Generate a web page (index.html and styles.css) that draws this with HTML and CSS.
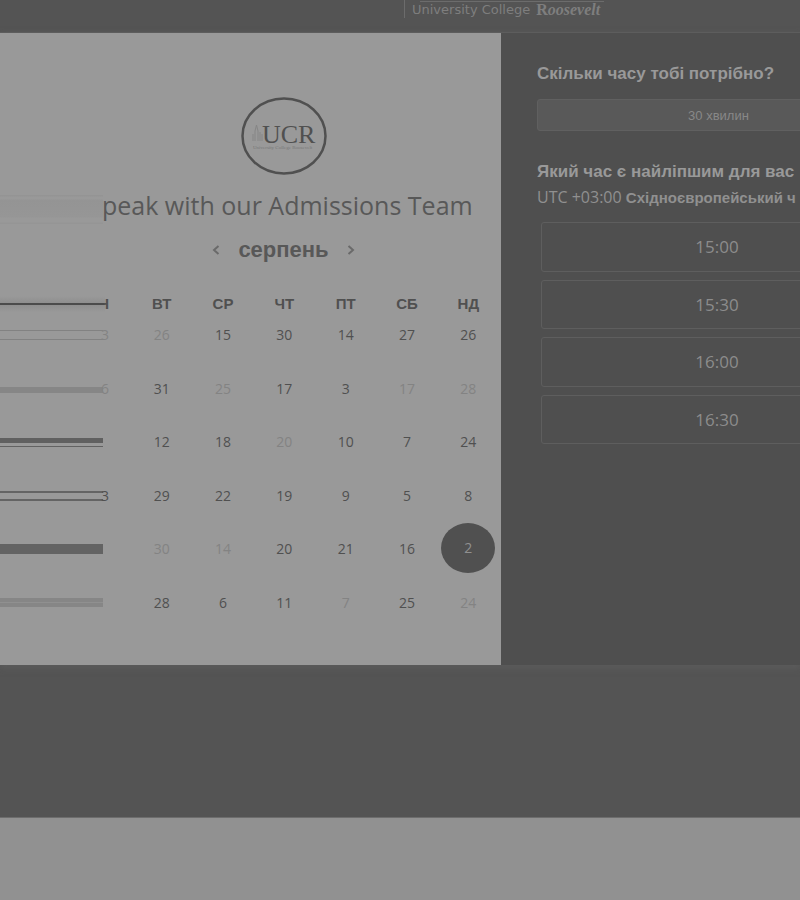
FILE: index.html
```html
<!DOCTYPE html>
<html lang="uk">
<head>
<meta charset="utf-8">
<title>Admissions Team</title>
<link rel="stylesheet" href="styles.css">
</head>
<body>
<header class="site-header">
  <div class="brand"><div class="brand-rule"></div><div class="brand-name"><span>University College</span><em><b>R</b>oosevelt</em></div></div>
</header>
<main class="booking">
  <section class="calendar">
    <svg class="logo" viewBox="0 0 88 80" role="img" aria-label="UCR">
      <ellipse cx="44" cy="40" rx="41.500" ry="37.500" fill="none" stroke="#505050" stroke-width="2.500"/>
      <path d="M13 45V38M15 45V35l1.500-6 1.500 6v10M20 45V36M22 45V38" fill="none" stroke="#858585" stroke-width="1"/>
      <text class="logo-letters" x="22" y="47">UCR</text>
      <text class="logo-caption" x="13" y="53">University College Roosevelt</text>
    </svg>
    <h1 class="title">peak with our Admissions Team</h1>
    <div class="month">
      <button class="arrow" aria-label="Попередній місяць"><svg viewBox="0 0 8 10"><path d="M6.500 1L2 5l4.500 4"/></svg></button>
      <h2>серпень</h2>
      <button class="arrow" aria-label="Наступний місяць"><svg viewBox="0 0 8 10"><path d="M1.500 1L6 5 1.500 9"/></svg></button>
    </div>
    <table class="days">
      <thead><tr><th class="edge streak-head"><span class="cut">Н</span></th><th>ВТ</th><th>СР</th><th>ЧТ</th><th>ПТ</th><th>СБ</th><th>НД</th></tr></thead>
      <tbody>
        <tr><td class="edge streak-a"><button disabled>3</button></td><td><button disabled>26</button></td><td><button>15</button></td><td><button>30</button></td><td><button>14</button></td><td><button>27</button></td><td><button>26</button></td></tr>
        <tr><td class="edge streak-b"><button disabled>6</button></td><td><button>31</button></td><td><button disabled>25</button></td><td><button>17</button></td><td><button>3</button></td><td><button disabled>17</button></td><td><button disabled>28</button></td></tr>
        <tr><td class="edge streak-c"></td><td><button>12</button></td><td><button>18</button></td><td><button disabled>20</button></td><td><button>10</button></td><td><button>7</button></td><td><button>24</button></td></tr>
        <tr><td class="edge streak-d"><button>3</button></td><td><button>29</button></td><td><button>22</button></td><td><button>19</button></td><td><button>9</button></td><td><button>5</button></td><td><button>8</button></td></tr>
        <tr><td class="edge streak-e"></td><td><button disabled>30</button></td><td><button disabled>14</button></td><td><button>20</button></td><td><button>21</button></td><td><button>16</button></td><td><button class="selected">2</button></td></tr>
        <tr><td class="edge streak-f"></td><td><button>28</button></td><td><button>6</button></td><td><button>11</button></td><td><button disabled>7</button></td><td><button>25</button></td><td><button disabled>24</button></td></tr>
      </tbody>
    </table>
  </section>
  <section class="schedule">
    <h2>Скільки часу тобі потрібно?</h2>
    <button class="duration">30 хвилин</button>
    <h2>Який час є найліпшим для вас</h2>
    <p class="zone"><span>UTC +03:00</span> <b>Східноєвропейський ч</b></p>
    <div class="slots">
      <button>15:00</button>
      <button>15:30</button>
      <button>16:00</button>
      <button>16:30</button>
    </div>
  </section>
</main>
<footer class="site-footer"></footer>
</body>
</html>
```
FILE: styles.css
```css
* { box-sizing: border-box; }
body {
  margin: 0;
  min-height: 100vh;
  display: flex;
  flex-direction: column;
  overflow-x: hidden;
  background: #545454;
  font-family: "Open Sans", "Liberation Sans", sans-serif;
  color: #505050;
}
h1, h2, p { margin: 0; }
button { font: inherit; color: inherit; background: none; border: 0; padding: 0; }

.site-header { height: 32px; padding-left: 404px; }
.brand { width: 200px; height: 18px; border-left: 1px solid #6c6c6c; color: #7e7e7e; }
.brand-rule { height: 2px; margin-left: 15px; border-bottom: 1px solid #6c6c6c; }
.brand-name {
  display: flex;
  gap: 6px;
  padding-left: 7px;
  font-size: 13px;
  line-height: 16px;
  white-space: nowrap;
}
.brand-name span { flex: 0 0 118px; font-family: "DejaVu Sans", sans-serif; }
.brand-name em { font: italic bold 16px/16px "Liberation Serif", serif; }
.brand-name b { font-style: normal; }

.booking {
  display: grid;
  grid-template-columns: minmax(0, 501fr) minmax(0, 299fr);
  border-top: 1px solid #5d5d5d;
  box-shadow: 0 3px 6px #5c5c5c;
}
.calendar {
  background: #999;
  padding: 63px 0 19px;
  display: flex;
  flex-direction: column;
}
.logo { align-self: flex-start; width: 88px; height: 80px; margin-left: calc(50% - 11px); }
.logo-letters { font: 26px "Liberation Serif", serif; fill: #505050; }
.logo-caption { font: 5px "Liberation Serif", serif; fill: #777; }
.title {
  margin-top: 10px;
  padding-left: 102px;
  font-size: 25px;
  font-weight: 400;
  line-height: 38px;
  color: #585858;
  white-space: nowrap;
  word-spacing: normal;
  background: linear-gradient(#949494 1px, #999 2px 4px, #949494 5px, #969696 22px, #999 23px 27px, #959595 28px) 0 9px / 103px 30px no-repeat;
}
.month {
  display: flex;
  align-items: center;
  justify-content: center;
  gap: 18px;
  padding-left: 66px;
  margin-top: 10px;
  height: 32px;
}
.month h2 { font: bold 22px/32px "Liberation Sans", sans-serif; color: #585858; }
.arrow { display: flex; }
.arrow svg { width: 8px; height: 10px; fill: none; stroke: #6a6a6a; stroke-width: 2; }

.days {
  width: calc(100% - 2px);
  height: 350px;
  margin-top: 30px;
  border-collapse: collapse;
  table-layout: fixed;
  font-size: 14px;
  line-height: 20px;
}
.days th, .days td { padding: 0; vertical-align: top; text-align: center; }
.days th { height: 29px; font: bold 15px/16px "Liberation Sans", sans-serif; }
.days button { display: block; width: 100%; height: 20px; }
.days button:disabled { color: #838383; }
.days .edge { width: 131px; text-align: left; background-repeat: no-repeat; background-size: 103px 20px; }
.days .edge button { text-align: left; padding-left: 101px; }
.cut { display: flex; justify-content: flex-end; width: 5px; margin-left: 104px; overflow: hidden; }
.days .streak-head { background-size: 105px 16px; background-image: linear-gradient(#999, #8e8e8e 45%, #4b4b4b 45%, #4b4b4b 56%, #8e8e8e 56%, #999); }
.streak-a { background-image: linear-gradient(transparent 5px, #828282 5px 6px, transparent 6px 14px, #828282 14px 15px, transparent 15px); }
.streak-b { background-image: linear-gradient(transparent 8px, #868686 8px 14px, transparent 14px); }
.streak-c { background-image: linear-gradient(transparent 6px, #606060 6px 11px, transparent 11px 14px, #626262 14px 15px, transparent 15px); }
.streak-d { background-image: linear-gradient(transparent 5px, #646464 5px 7px, transparent 7px 13px, #646464 13px 15px, transparent 15px); }
.streak-e { background-image: linear-gradient(transparent 5px, #636363 5px 15px, transparent 15px); }
.streak-f { background-image: linear-gradient(transparent 5px, #868686 5px 9px, #909090 9px 10px, #868686 10px 14px, transparent 14px); }
.days .selected {
  width: 54px;
  height: 50px;
  margin: -16px auto -14px;
  border-radius: 50%;
  background: #505050;
  color: #909090;
}

.schedule {
  background: #4f4f4f;
  color: #999;
  padding: 30px 0 0 36px;
  overflow: hidden;
  white-space: nowrap;
}
.schedule h2 { font: bold 17px/22px "Liberation Sans", sans-serif; }
.duration {
  display: block;
  width: 363px;
  height: 32px;
  margin: 14px 0 30px;
  border: 1px solid #606060;
  border-radius: 3px;
  background: #595959;
  color: #888;
  font-family: "Liberation Sans", sans-serif;
  font-size: 13px;
}
.zone { margin-top: 3px; font-size: 16px; line-height: 22px; color: #909090; }
.zone b { font: bold 15px/22px "Liberation Sans", sans-serif; }
.slots {
  display: grid;
  grid-template-rows: repeat(4, 1fr);
  gap: 8px;
  width: 352px;
  height: 222px;
  margin: 13px 0 0 4px;
}
.slots button {
  border: 1px solid #5e5e5e;
  border-radius: 3px;
  color: #8c8c8c;
  font-size: 17px;
}
.site-footer { flex: 1; margin-top: 152px; background: #919191; border-top: 1px solid #6d6d6d; }
```
